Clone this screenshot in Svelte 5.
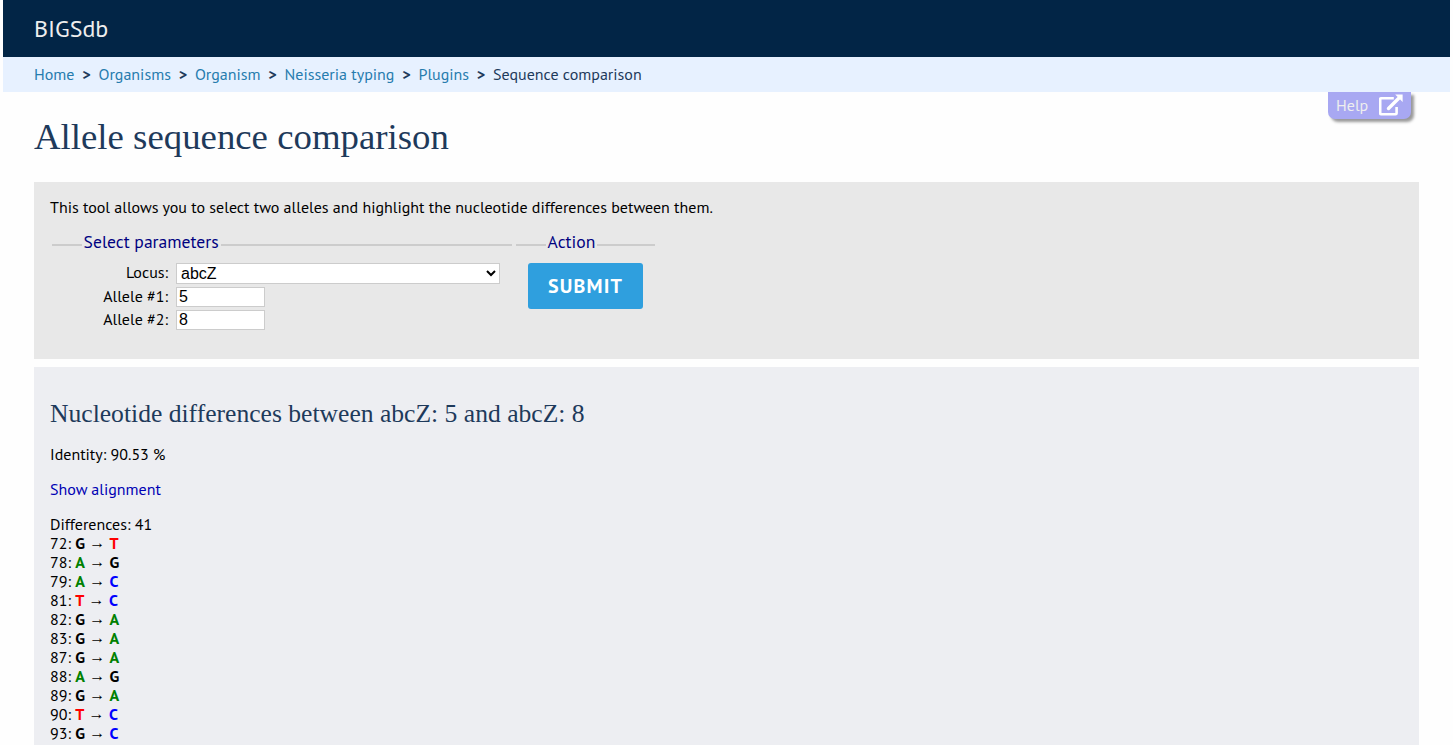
<script>
  const crumbs = ['Home', 'Organisms', 'Organism', 'Neisseria typing', 'Plugins'];
  const differences = [
    [72, 'G', 'T'],
    [78, 'A', 'G'],
    [79, 'A', 'C'],
    [81, 'T', 'C'],
    [82, 'G', 'A'],
    [83, 'G', 'A'],
    [87, 'G', 'A'],
    [88, 'A', 'G'],
    [89, 'G', 'A'],
    [90, 'T', 'C'],
    [93, 'G', 'C']
  ];
  let locus = $state('abcZ');
  let allele1 = $state('5');
  let allele2 = $state('8');
</script>

<div class="page">
  <header><span>BIGSdb</span></header>
  <nav>
    {#each crumbs as crumb}
      <a href="#top">{crumb}</a><b>&gt;</b>
    {/each}
    <span class="current">Sequence comparison</span>
  </nav>
  <a class="help" href="#help">
    <span>Help</span>
    <svg width="24" height="22" viewBox="0 0 24 22" fill="none" stroke="#fff">
      <path d="M14.8 4.2H2.2Q1.2 4.2 1.2 5.2V19.3Q1.2 20.3 2.2 20.3H16.6Q17.6 20.3 17.6 19.3V13" stroke-width="2.6" />
      <path d="M9.5 14.5L20.5 3.5" stroke-width="3.4" stroke-linecap="round" />
      <path d="M16.2 .6H23.6V8Z" fill="#fff" stroke="none" />
    </svg>
  </a>
  <main>
    <h1><span>Allele sequence comparison</span></h1>
    <section class="query">
      <p class="intro"><span>This tool allows you to select two alleles and highlight the nucleotide differences between them.</span></p>
      <form onsubmit={(e) => e.preventDefault()}>
        <div class="group parameters">
          <div class="legend"><span>Select parameters</span></div>
          <div class="row select-row">
            <label for="locus">Locus:</label>
            <select id="locus" bind:value={locus}><option>abcZ</option></select>
          </div>
          <div class="row">
            <label for="allele1">Allele #1:</label>
            <input id="allele1" bind:value={allele1} />
          </div>
          <div class="row">
            <label for="allele2">Allele #2:</label>
            <input id="allele2" bind:value={allele2} />
          </div>
        </div>
        <div class="group action">
          <div class="legend"><span>Action</span></div>
          <button>SUBMIT</button>
        </div>
      </form>
    </section>
    <section class="results">
      <h2><span>Nucleotide differences between abcZ: 5 and abcZ: 8</span></h2>
      <p><span class="identity">Identity: 90.53 %</span></p>
      <p><a class="alignment" href="#alignment">Show alignment</a></p>
      <p><span class="count">Differences: 41</span></p>
      {#each differences as [position, from, to]}
        <div class="difference">{position}: <b class={from}>{from}</b> <span class="arrow">→</span> <b class={to}>{to}</b></div>
      {/each}
    </section>
  </main>
</div>

<style>
  :global(html) { overflow: hidden; }
  :global(body) { background: #fefefe; overflow: hidden; }
  * { box-sizing: border-box; }
  .page {
    position: relative;
    height: 745px;
    margin: 0 3px;
    overflow: hidden;
    font: 16px/19px "PT Sans", "Noto Sans", sans-serif;
    color: #000;
  }
  a { text-decoration: none; }
  header {
    height: 57px;
    padding-left: 31px;
    background: #022546;
    color: #eee;
    font-size: 24px;
    line-height: 57px;
  }
  nav {
    display: flex;
    height: 35px;
    padding-left: 31px;
    background: #e7f1ff;
    line-height: 35px;
    white-space: nowrap;
  }
  nav a { color: #267cae; }
  nav b { width: 24px; text-align: center; color: #1e3a5b; }
  .current { color: #1e3a5b; }
  .help {
    position: absolute;
    top: 92px;
    right: 39px;
    display: flex;
    justify-content: space-between;
    width: 83px;
    height: 27px;
    padding: 2px 8px;
    border-radius: 0 0 7px 7px;
    background: #a8a8f2;
    box-shadow: 3px 3px 3px #999;
    color: #eee;
    line-height: 23px;
  }
  main { padding: 0 31px; }
  h1, h2 {
    margin: 0;
    color: #1e3a5b;
    font-family: "Liberation Serif", serif;
    font-weight: 400;
    white-space: nowrap;
  }
  h1 { height: 90px; font-size: 36.8px; line-height: 90px; }
  .query { height: 177px; padding: 16px; background: #e8e8e8; }
  p { margin: 0 0 16px; }
  .intro { margin-bottom: 15px; }
  form { display: flex; gap: 4px; padding-left: 2px; }
  .parameters { width: 460px; }
  .action { width: 139px; }
  .legend {
    display: flex;
    align-items: center;
    gap: 2px;
    height: 20px;
    margin-bottom: 11px;
    color: #000080;
    font-size: 17.6px;
    line-height: 20px;
    white-space: nowrap;
  }
  .legend::before, .legend::after { content: ""; height: 2px; margin-top: 6px; background: #ccc; }
  .legend::before { width: 30px; margin-right: -0.4px; }
  .legend::after { flex: 1; }
  .row { display: flex; height: 20px; margin-bottom: 3px; }
  .select-row { height: 21px; }
  label { width: 116px; margin-right: 8px; text-align: right; }
  select, input {
    margin: 0;
    border: 1px solid #ccc;
    border-radius: 0;
    background-color: #fff;
    color: #000;
    font: 16px "Liberation Sans", Arial, sans-serif;
  }
  select { width: 324px; height: 21px; padding: 0; }
  input { width: 89px; height: 20px; padding: 1px 2px; }
  button {
    display: block;
    width: 115px;
    height: 46px;
    margin-left: 12px;
    padding: 0;
    border: 0;
    border-radius: 3px;
    background: #2f9fde;
    color: #fff;
    font: 700 20px/46px "PT Sans", "Noto Sans", sans-serif;
    letter-spacing: 1.2px;
  }
  .results { height: 400px; margin-top: 8px; padding: 30px 16px 0; background: #edeef2; }
  h2 { height: 48px; font-size: 25.6px; line-height: 34px; }
  .alignment { color: #0000b4; }
  p:has(.count) { margin: 0; }
  .difference { height: 19px; }
  .arrow { font-family: "Liberation Serif", serif; line-height: 1; vertical-align: 1px; }
  .A { color: #008000; }
  .C { color: #00f; }
  .G { color: #000; }
  .T { color: #f00; }
</style>
